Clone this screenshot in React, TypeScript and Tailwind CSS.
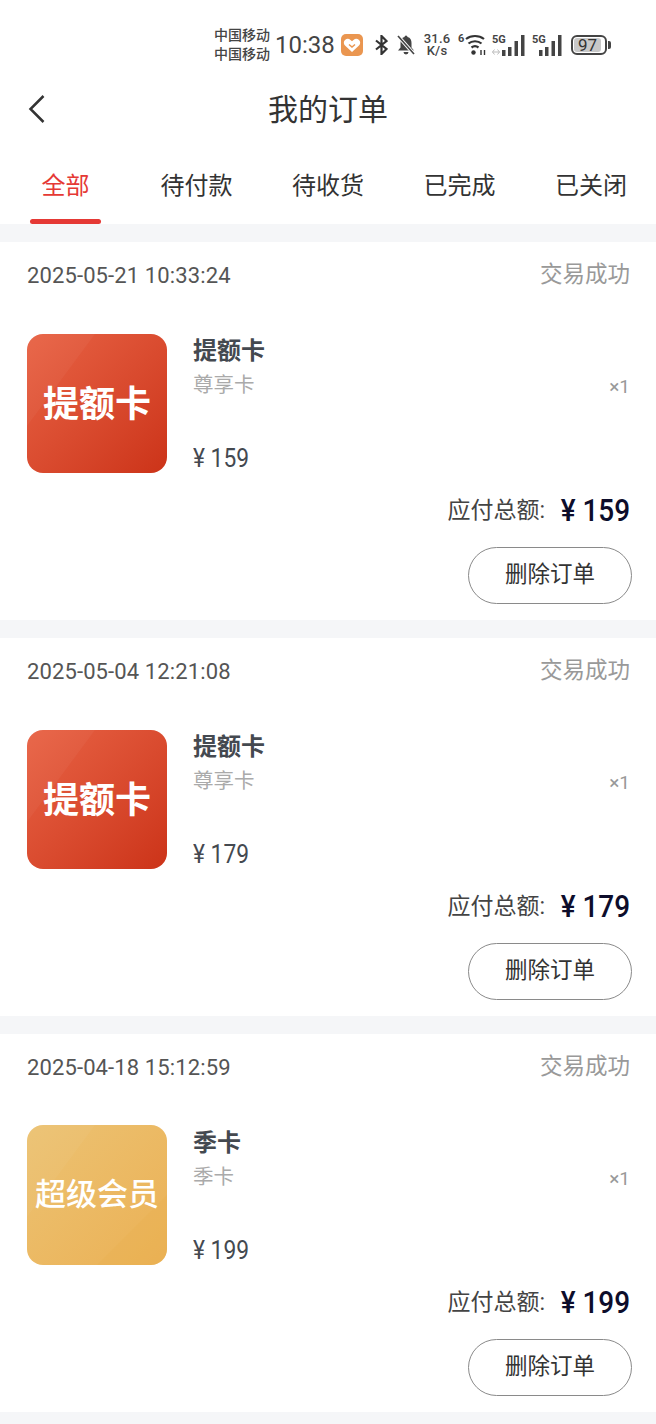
const FONT = "font-['Roboto','Noto_Sans_CJK_SC',sans-serif]";

const TABS = ['全部', '待付款', '待收货', '已完成', '已关闭'];

const ORDERS = [
  { date: '2025-05-21 10:33:24', name: '提额卡', sub: '尊享卡', price: '159', gold: false },
  { date: '2025-05-04 12:21:08', name: '提额卡', sub: '尊享卡', price: '179', gold: false },
  { date: '2025-04-18 15:12:59', name: '季卡', sub: '季卡', price: '199', gold: true },
];

function Signal({ arrows, width }: { arrows: boolean; width: number }) {
  const left = width - 23;
  return (
    <span className="relative block h-[23px]" style={{ width }}>
      <svg className="absolute left-0 top-0" width={width} height="23" viewBox={`0 0 ${width} 23`} fill="#444">
        <rect x={left} y="16" width="3.500" height="6" />
        <rect x={left + 6} y="13" width="3.500" height="9" />
        <rect x={left + 12.500} y="7" width="3.500" height="15" />
        <rect x={left + 19} y="1" width="3.500" height="21" />
        {arrows && <path d="M0.500 18h7M2.500 15.500 0.500 18l2 2.500M5.500 15.500 7.500 18l-2 2.500" fill="none" stroke="#bbb" strokeWidth="1" />}
      </svg>
      <span className="absolute left-0 top-0 text-[11px] leading-[12px] font-bold text-[#444]">5G</span>
    </span>
  );
}

function StatusBar() {
  return (
    <div className="flex h-[70px] items-end justify-end pb-[6px] pr-[45px] text-[#444]">
      <div className="flex items-center">
        <div className="w-[56px] text-[14px] leading-[19px] font-medium">
          <div>中国移动</div>
          <div>中国移动</div>
        </div>
        <span className="ml-[5px] w-[59px] text-[24px] leading-none">10:38</span>
        <svg className="ml-[7px]" width="22" height="22" viewBox="0 0 22 22">
          <rect width="22" height="22" rx="5" fill="#ea9650" />
          <path d="M11 18 4 11.500a3.800 3.800 0 0 1 0-5.500 4 4 0 0 1 5.500 0L11 7.300 12.500 6a4 4 0 0 1 5.500 0 3.800 3.800 0 0 1 0 5.500z" fill="#fff" />
          <path d="M8 10.500l3 2.500 3-2.500" fill="none" stroke="#ea9650" strokeWidth="1.500" />
        </svg>
        <svg className="ml-[12px]" width="13" height="20" viewBox="0 0 13 20" fill="none" stroke="#333" strokeWidth="2.200">
          <path d="M1 5.500 11.500 14 6.500 19V1l5 5L1 14.500" />
        </svg>
        <svg className="ml-[9px]" width="18" height="20" viewBox="0 0 18 20" fill="#444">
          <path d="M9 0.500a1.500 1.500 0 0 1 1.500 1.500c3 .8 4 3 4 6v4.500L17 15.500H1l2.500-3V8c0-3 1-5.200 4-6A1.500 1.500 0 0 1 9 0.500zM6.500 17h5a2.500 2.500 0 0 1-5 0z" />
          <path d="M1 1l16 18" stroke="#fff" strokeWidth="3.500" />
          <path d="M1 1l16 18" stroke="#444" strokeWidth="1.600" />
        </svg>
        <div className="ml-[8px] w-[28px] text-center text-[13px] leading-[12px] font-medium tracking-[0.2px]">
          <div>31.6</div>
          <div>K/s</div>
        </div>
        <span className="relative ml-[7px] block h-[24px] w-[29px]">
          <span className="absolute left-0 top-0 text-[11px] leading-[12px] font-bold">6</span>
          <svg className="absolute left-0 top-0" width="29" height="24" viewBox="0 0 29 24" fill="none" stroke="#333" strokeWidth="2.200">
            <path d="M8 6c5-4 13-4 18 0M10.500 10.500c3.500-3 9.500-3 13 0M13.500 14.500c2-1.500 5-1.500 7 0" />
            <circle cx="15.500" cy="19.500" r="2.200" fill="#333" stroke="none" />
            <path d="M23 17v5M26.500 17v5" strokeWidth="1.400" />
          </svg>
        </span>
        <span className="ml-[5px]"><Signal arrows width={33} /></span>
        <span className="ml-[7px]"><Signal arrows={false} width={30} /></span>
        <span className="ml-[9px] flex items-center">
          <span className="flex h-[20px] w-[36px] items-center rounded-[6px] border-2 border-[#444] p-[1px]">
            <span className="flex h-full w-[27px] items-center justify-center rounded-[3px] bg-[#c8c8c8] text-[17px] leading-none text-[#333]">97</span>
          </span>
          <span className="ml-[1px] h-[8px] w-[3px] rounded-r-[2px] bg-[#444]"></span>
        </span>
      </div>
    </div>
  );
}

function Thumb({ gold }: { gold: boolean }) {
  return (
    <div className={`relative flex w-[140px] shrink-0 items-center justify-center overflow-hidden rounded-[16px] ${gold ? 'h-[140px] -translate-y-px bg-gradient-to-br from-[#ecc272] to-[#ebb155]' : 'h-[139px] bg-gradient-to-br from-[#e86244] to-[#cc3318] pt-[2px]'}`}>
      <svg className="absolute inset-0" width="140" height="140" viewBox="0 0 140 140">
        <polygon points="0,0 68,0 0,92" fill="#fff" opacity="0.04" />
        {gold && <polygon points="140,70 140,140 70,140" fill="#e8b04a" opacity="0.25" />}
      </svg>
      <span className={`relative text-white ${gold ? 'text-[31px] font-medium' : 'text-[36px] font-bold'}`}>
        {gold ? '超级会员' : '提额卡'}
      </span>
    </div>
  );
}

export default function App() {
  return (
    <div className={`h-[1424px] overflow-hidden bg-[#f5f6f8] ${FONT}`}>
      <div className="bg-white">
        <StatusBar />
        <div className="relative flex h-[78px] items-center justify-center pt-[2px]">
          <svg className="absolute left-[26px] top-[23px]" width="22" height="32" viewBox="0 0 22 32" fill="none" stroke="#333" strokeWidth="2.500">
            <path d="M17.500 3 4.500 16l13 13" />
          </svg>
          <span className="text-[30px] leading-none text-[#333]">我的订单</span>
        </div>
        <div className="flex h-[76px] justify-between pl-[30px] pr-[29px]">
          {TABS.map((t, i) => (
            <div key={t} className={`relative flex items-start justify-center pt-[21px] ${i === 0 ? 'w-[71px]' : ''}`}>
              <span className={`text-[24px] leading-[34px] ${i === 0 ? 'text-[#e53935]' : 'text-[#333]'}`}>{t}</span>
              {i === 0 && <span className="absolute bottom-0 left-0 h-[5px] w-[71px] rounded-full bg-[#e53935]"></span>}
            </div>
          ))}
        </div>
      </div>
      <div className="mt-[18px] flex flex-col gap-[18px]">
        {ORDERS.map((o) => (
          <div key={o.date} className="h-[378px] bg-white pl-[27px] pr-[26px]">
            <div className="flex h-[66px] items-center justify-between">
              <span className="text-[22px] tracking-[0.12px] text-[#555]">{o.date}</span>
              <span className="text-[22.500px] text-[#999]">交易成功</span>
            </div>
            <div className="mt-[26px] flex h-[140px]">
              <Thumb gold={o.gold} />
              <div className="ml-[26px] flex flex-1 flex-col items-start pt-[1px]">
                <span className="text-[24px] leading-[32px] font-bold text-[#444950]">{o.name}</span>
                <span className="mt-[2px] text-[20.500px] leading-[32px] text-[#aaa]">{o.sub}</span>
                <span className="mt-[42px] inline-block origin-left scale-x-[0.91] text-[25px] leading-[32px] text-[#444950]">¥ {o.price}</span>
              </div>
              <span className="mt-[38px] text-[19px] leading-[30px] text-[#999]">×1</span>
            </div>
            <div className="mt-[17px] flex h-[40px] items-center justify-end">
              <span className="text-[23px] text-[#444]">应付总额:</span>
              <span className="ml-[8px] inline-block origin-right scale-x-[0.9] text-[31px] font-medium text-[#0d0d2b]">¥ {o.price}</span>
            </div>
            <div className="-mr-[2px] mt-[16px] flex justify-end">
              <button className="h-[57px] w-[164px] rounded-full border border-[#8a8a8a] pb-[2px] text-[22.500px] text-[#333]">删除订单</button>
            </div>
          </div>
        ))}
      </div>
    </div>
  );
}
